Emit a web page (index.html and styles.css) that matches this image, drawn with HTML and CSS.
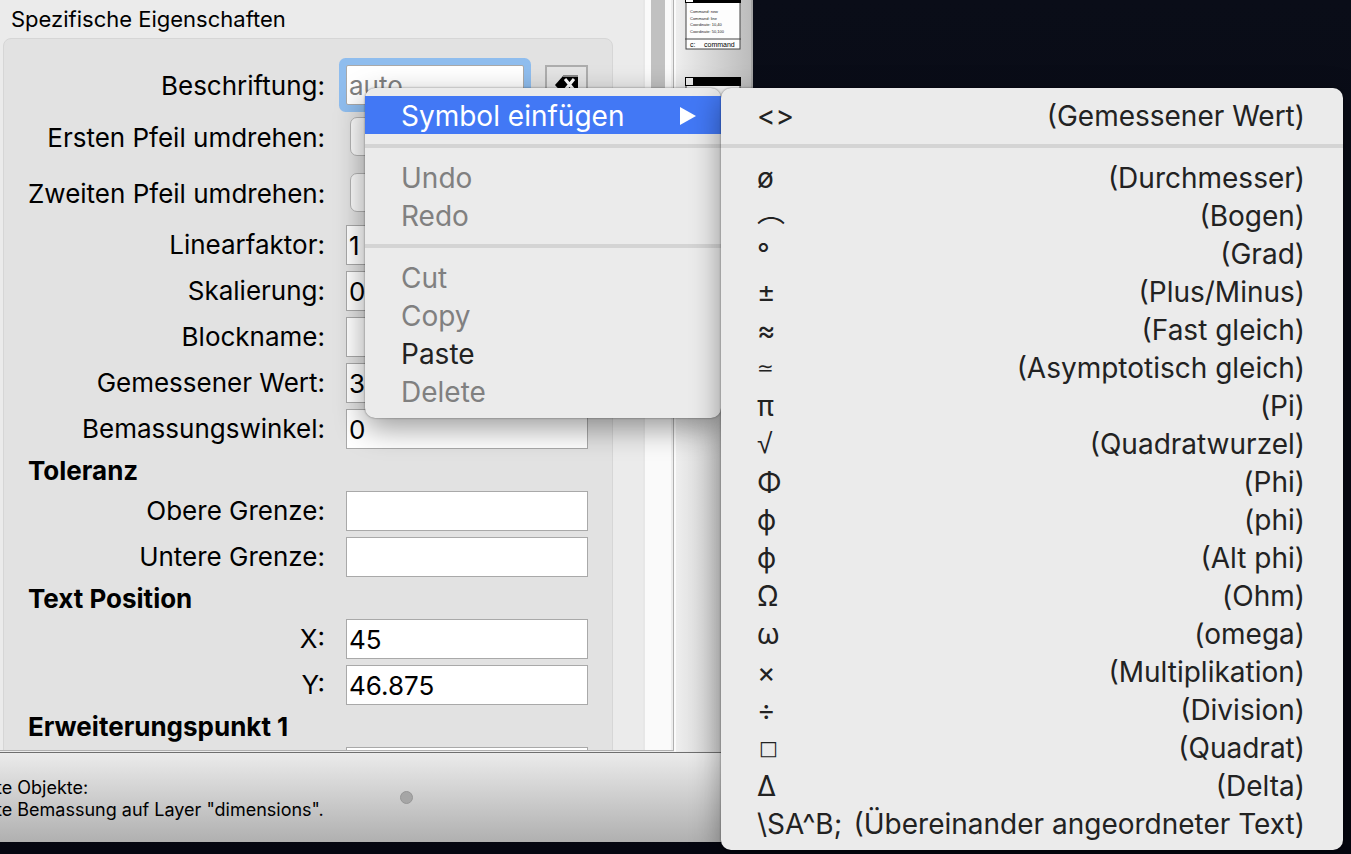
FILE: index.html
```html
<!DOCTYPE html>
<html lang="de">
<head>
    <meta charset="UTF-8">
    <meta name="viewport" content="width=device-width, initial-scale=1.0">
    <title>Spezifische Eigenschaften</title>
    <link rel="stylesheet" href="styles.css">
</head>
<body>

    <div class="window">
        <div class="workspace">
            <!-- Property editor -->
            <div class="dock">
                <div class="scroll-area">
                    <h2 class="group-title">Spezifische Eigenschaften</h2>
                    <form class="group-box">
                        <div class="row row-first">
                            <label for="label">Beschriftung:</label>
                            <div class="field">
                                <input class="focused" type="text" id="label" placeholder="auto">
                                <button type="button" class="clear-btn" aria-label="Löschen">
                                    <svg width="24" height="20" viewBox="0 0 24 20">
                                        <path d="M8 1h15v18H8L0 10z" fill="#000"/>
                                        <rect x="8" y="0" width="15" height="2" fill="#888"/>
                                        <path d="M10 4l9 11M19 4l-9 11" stroke="#fff" stroke-width="3"/>
                                    </svg>
                                </button>
                            </div>
                        </div>
                        <div class="row row-check">
                            <label for="flip1">Ersten Pfeil umdrehen:</label>
                            <div class="field"><button type="button" class="toggle" id="flip1"></button></div>
                        </div>
                        <div class="row row-check">
                            <label for="flip2">Zweiten Pfeil umdrehen:</label>
                            <div class="field"><button type="button" class="toggle" id="flip2"></button></div>
                        </div>
                        <div class="row">
                            <label for="linear">Linearfaktor:</label>
                            <div class="field"><input type="text" id="linear" value="1"></div>
                        </div>
                        <div class="row">
                            <label for="scale">Skalierung:</label>
                            <div class="field"><input type="text" id="scale" value="0"></div>
                        </div>
                        <div class="row">
                            <label for="block">Blockname:</label>
                            <div class="field"><input type="text" id="block"></div>
                        </div>
                        <div class="row">
                            <label for="measured">Gemessener Wert:</label>
                            <div class="field"><input type="text" id="measured" value="3"></div>
                        </div>
                        <div class="row">
                            <label for="angle">Bemassungswinkel:</label>
                            <div class="field"><input type="text" id="angle" value="0"></div>
                        </div>

                        <h3>Toleranz</h3>
                        <div class="row">
                            <label for="upper">Obere Grenze:</label>
                            <div class="field"><input type="text" id="upper"></div>
                        </div>
                        <div class="row">
                            <label for="lower">Untere Grenze:</label>
                            <div class="field"><input type="text" id="lower"></div>
                        </div>

                        <h3>Text Position</h3>
                        <div class="row">
                            <label for="pos-x">X:</label>
                            <div class="field"><input type="text" id="pos-x" value="45"></div>
                        </div>
                        <div class="row">
                            <label for="pos-y">Y:</label>
                            <div class="field"><input type="text" id="pos-y" value="46.875"></div>
                        </div>

                        <h3>Erweiterungspunkt 1</h3>
                        <div class="row">
                            <label for="ext-x"></label>
                            <div class="field"><input type="text" id="ext-x"></div>
                        </div>
                    </form>
                </div>
                <div class="scrollbar"><div class="thumb"></div></div>
            </div>

            <!-- Tool column -->
            <div class="toolbar">
                <svg width="56" height="50" viewBox="0 0 56 50">
                    <rect x="1" y="-12" width="54" height="61" fill="#fdfdfd" stroke="#444" stroke-width="1"/>
                    <rect x="0" y="-12" width="56" height="15" fill="#000"/>
                    <rect x="1" y="-5" width="7" height="7" fill="#fff"/>
                    <g class="icon-log">
                        <text x="5" y="13">Command: new</text>
                        <text x="5" y="20">Command: line</text>
                        <text x="5" y="26">Coordinate: 10,40</text>
                        <text x="5" y="33">Coordinate: 50,100</text>
                    </g>
                    <path d="M0 39h56" stroke="#444" stroke-width="1"/>
                    <g class="icon-prompt">
                        <text x="5" y="47">c:</text>
                        <text x="19" y="47">command</text>
                    </g>
                </svg>
                <svg width="56" height="50" viewBox="0 0 56 50">
                    <rect x="1" y="1" width="54" height="48" fill="#fdfdfd" stroke="#444" stroke-width="1"/>
                    <rect width="56" height="9" fill="#000"/>
                    <rect x="1" y="1" width="7" height="7" fill="#eee"/>
                </svg>
            </div>
        </div>

        <!-- Status bar -->
        <div class="statusbar">
            <p>te Objekte:<br>te Bemassung auf Layer "dimensions".</p>
            <span class="dot"></span>
        </div>
    </div>

    <!-- Context menu -->
    <div class="menu context-menu">
        <button class="active">Symbol einfügen
            <svg width="16" height="18" viewBox="0 0 16 18"><path d="M0 0l16 9L0 18z" fill="#fff"/></svg>
        </button>
        <hr>
        <button disabled>Undo</button>
        <button disabled>Redo</button>
        <hr>
        <button disabled>Cut</button>
        <button disabled>Copy</button>
        <button>Paste</button>
        <button disabled>Delete</button>
    </div>

    <!-- Symbol submenu -->
    <div class="menu symbol-menu">
        <button><span>&lt;&gt;</span><span>(Gemessener Wert)</span></button>
        <hr>
        <button><span>ø</span><span>(Durchmesser)</span></button>
        <button><span class="glyph-arc">⌒</span><span>(Bogen)</span></button>
        <button><span>°</span><span>(Grad)</span></button>
        <button><span>±</span><span>(Plus/Minus)</span></button>
        <button><span>≈</span><span>(Fast gleich)</span></button>
        <button><span class="glyph-small">≃</span><span>(Asymptotisch gleich)</span></button>
        <button><span>π</span><span>(Pi)</span></button>
        <button><span class="glyph-root">√</span><span>(Quadratwurzel)</span></button>
        <button><span>Φ</span><span>(Phi)</span></button>
        <button><span>ϕ</span><span>(phi)</span></button>
        <button><span>ϕ</span><span>(Alt phi)</span></button>
        <button><span>Ω</span><span>(Ohm)</span></button>
        <button><span>ω</span><span>(omega)</span></button>
        <button><span>×</span><span>(Multiplikation)</span></button>
        <button><span>÷</span><span>(Division)</span></button>
        <button><span class="glyph-small glyph-square">□</span><span>(Quadrat)</span></button>
        <button><span>Δ</span><span>(Delta)</span></button>
        <button><span>\SA^B;</span><span>(Übereinander angeordneter Text)</span></button>
    </div>

</body>
</html>
```

FILE: styles.css
```css
* {
    box-sizing: border-box;
}
body {
    margin: 0;
    height: 100vh;
    overflow: hidden;
    background: linear-gradient(#0a0d18, #050610);
    font-family: Inter, "Liberation Sans", "DejaVu Sans", sans-serif;
    font-size: 26px;
    color: #000;
}
button,
input {
    font: inherit;
    color: inherit;
}

/* Application window */
.window {
    display: flex;
    flex-direction: column;
    width: calc(100% - 598px);
    height: calc(100vh - 12px);
    background-color: #ebebeb;
}
.workspace {
    display: flex;
    flex: 1;
    min-height: 0;
}
.dock {
    display: flex;
    flex: 1;
    min-width: 0;
    border-right: 1px solid #b0b0b0;
    border-bottom: 1px solid #b0b0b0;
    margin-bottom: 1px;
}
.scroll-area {
    flex: 1;
    overflow: hidden;
    padding: 0 30px 0 3px;
}
.group-title {
    margin: 0;
    padding-left: 8px;
    font-size: 22px;
    font-weight: 400;
    line-height: 38px;
}
.group-box {
    display: flex;
    flex-direction: column;
    gap: 6px;
    padding: 26px 24px 26px;
    background-color: #e2e2e2;
    border: 1px solid #d6d6d6;
    border-radius: 8px;
}
.row {
    display: flex;
    flex-shrink: 0;
    align-items: center;
    gap: 21px;
    height: 40px;
}
.row label {
    flex: 1;
    padding-bottom: 2px;
    text-align: right;
    white-space: nowrap;
}
.row-first {
    height: 42px;
}
.row-check {
    height: 50px;
}
.field {
    display: flex;
    justify-content: space-between;
    width: 242px;
}
.field input {
    flex: 1;
    min-width: 0;
    height: 40px;
    padding: 0 2px;
    background-color: #fff;
    border: 1px solid #a9a9a9;
    border-radius: 0;
    outline: none;
}
.field input::placeholder {
    color: #808080;
    opacity: 1;
}
.row-first .field {
    padding-bottom: 2px;
}
.field .focused {
    margin-right: 21px;
    box-shadow: 0 0 0 7px #8fbdee;
    border-radius: 2px;
}
.clear-btn {
    display: flex;
    align-items: center;
    justify-content: center;
    width: 43px;
    padding: 0;
    background-color: #e4e4e4;
    border: 2px solid #adadad;
}
.row-check .field {
    padding-bottom: 4px;
}
.toggle {
    width: 44px;
    height: 39px;
    margin-left: 4px;
    background-color: #fafafa;
    border: 1px solid #b4b4b4;
    border-radius: 7px;
}
.group-box h3 {
    flex-shrink: 0;
    height: 30px;
    margin: 0;
    font-size: 26px;
    font-weight: 700;
    line-height: 32px;
}
.scrollbar {
    width: 30px;
    padding: 0 6px;
    background-color: #fafafa;
    border-left: 2px solid #e7e7e7;
    border-right: 2px solid #ededed;
}
.thumb {
    height: 400px;
    background-color: #c1c1c1;
}
.toolbar {
    display: flex;
    flex-direction: column;
    align-items: center;
    gap: 27px;
    width: 79px;
    padding-right: 1px;
    background: linear-gradient(90deg, #eee, #bcbcbc);
    border-left: 2px solid #fafafa;
    border-right: 2px solid #a4a4a4;
}
.toolbar text {
    font-family: "Liberation Sans", sans-serif;
}
.icon-log text {
    font-size: 4px;
    fill: #222;
}
.icon-prompt text {
    font-size: 7px;
    fill: #000;
}

/* Status bar */
.statusbar {
    display: flex;
    align-items: center;
    gap: 76px;
    height: 90px;
    border-top: 1px solid #6e6e6e;
    background: linear-gradient(#ebebeb, #b0b0b0);
}
.statusbar p {
    margin: 0 0 0 -4px;
    padding-top: 2px;
    font-size: 18px;
    line-height: 22px;
    white-space: nowrap;
}
.dot {
    width: 13px;
    height: 13px;
    border-radius: 50%;
    background-color: #a6a6a6;
    border: 1px solid #969696;
}

/* Menus */
.menu {
    position: absolute;
    top: 88px;
    padding: 8px 0;
    background-color: #ebebeb;
    border-radius: 10px;
    box-shadow: 0 0 2px rgba(0, 0, 0, 0.5), 0 10px 30px rgba(0, 0, 0, 0.4);
    font-size: 28px;
    color: #222;
}
.menu button {
    display: flex;
    align-items: center;
    justify-content: space-between;
    width: 100%;
    height: 38px;
    padding: 2px 38px 0 36px;
    background: none;
    border: none;
    white-space: nowrap;
}
.menu button:disabled {
    color: #808080;
}
.menu hr {
    height: 4px;
    margin: 10px 0;
    background-color: #d4d4d4;
    border: none;
}
.context-menu {
    left: 365px;
    width: 356px;
}
.context-menu .active {
    padding-right: 25px;
    background-color: #4278f5;
    color: #fff;
}
.symbol-menu {
    left: 721px;
    width: 622px;
}

/* Symbols that Inter does not cover */
.glyph-arc {
    padding-top: 26px;
    font-family: "Noto Sans CJK JP", sans-serif;
}
.glyph-root {
    font-family: "Liberation Sans", sans-serif;
}
.glyph-small {
    font-family: "DejaVu Sans", sans-serif;
    font-size: 20px;
}
.glyph-square {
    padding-left: 2px;
}
```
